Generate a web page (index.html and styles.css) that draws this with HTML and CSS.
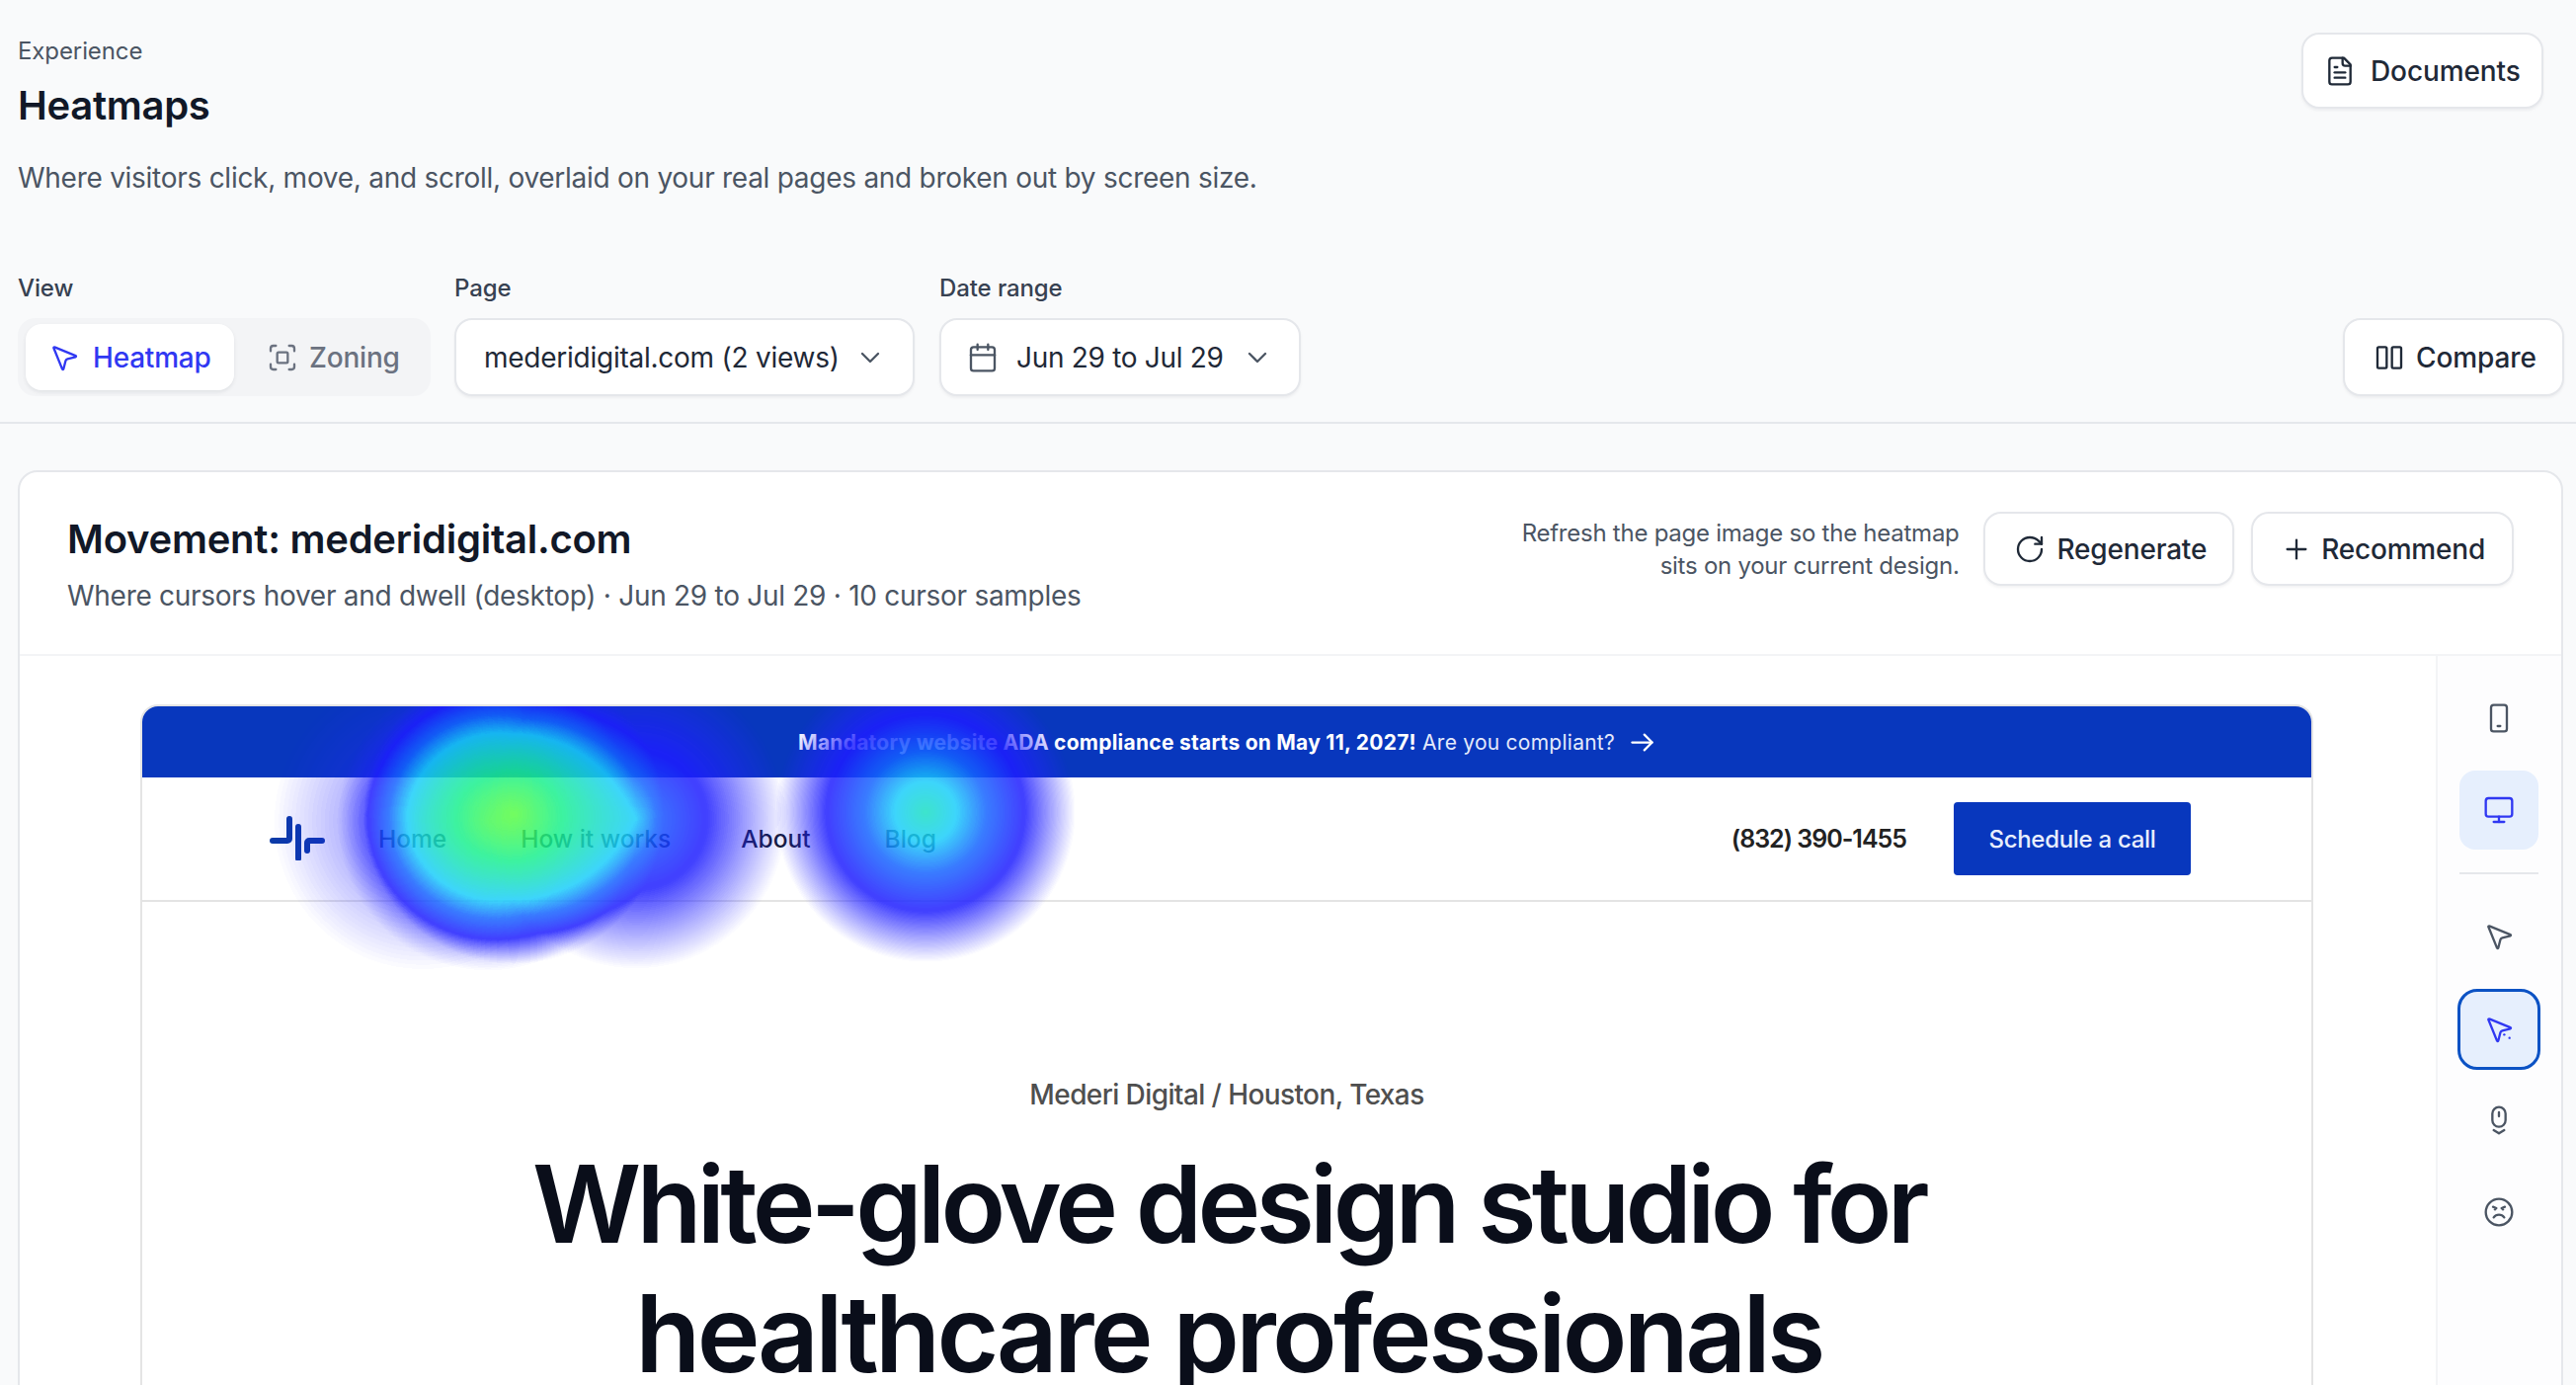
FILE: index.html
```html
<!DOCTYPE html>
<html lang="en">
<head>
    <meta charset="UTF-8">
    <meta name="viewport" content="width=device-width, initial-scale=1.0">
    <title>Heatmaps</title>
    <link rel="stylesheet" href="styles.css">
</head>
<body>
    <header class="page-head">
        <div>
            <div class="crumb">Experience</div>
            <h1>Heatmaps</h1>
            <p class="lead">Where visitors click, move, and scroll, overlaid on your real pages and broken out by screen size.</p>
        </div>
        <button class="btn btn-docs">
            <svg class="icon" viewBox="0 0 24 24"><path d="M15 2H6a2 2 0 0 0-2 2v16a2 2 0 0 0 2 2h12a2 2 0 0 0 2-2V7z"/><path d="M14 2v4a2 2 0 0 0 2 2h4"/><path d="M16 13H8"/><path d="M16 17H8"/><path d="M10 9H8"/></svg>
            Documents
        </button>
    </header>

    <section class="controls">
        <div class="field">
            <label>View</label>
            <div class="segmented">
                <button class="seg seg-on">
                    <svg class="icon" viewBox="0 0 24 24"><path d="M4.037 4.688a.495.495 0 0 1 .651-.651l16 6.500a.5.5 0 0 1-.063.947l-6.124 1.580a2 2 0 0 0-1.438 1.435l-1.579 6.126a.5.5 0 0 1-.947.063z"/></svg>
                    Heatmap
                </button>
                <button class="seg">
                    <svg class="icon" viewBox="0 0 24 24"><path d="M3 7V5a2 2 0 0 1 2-2h2"/><path d="M17 3h2a2 2 0 0 1 2 2v2"/><path d="M21 17v2a2 2 0 0 1-2 2h-2"/><path d="M7 21H5a2 2 0 0 1-2-2v-2"/><rect x="8" y="8" width="8" height="8" rx="1"/></svg>
                    Zoning
                </button>
            </div>
        </div>
        <div class="field">
            <label>Page</label>
            <button class="btn btn-select btn-page">
                mederidigital.com (2 views)
                <svg class="icon chev" viewBox="0 0 24 24"><path d="m6 9 6 6 6-6"/></svg>
            </button>
        </div>
        <div class="field">
            <label>Date range</label>
            <button class="btn btn-select btn-date">
                <svg class="icon cal" viewBox="0 0 24 24"><path d="M8 2v4"/><path d="M16 2v4"/><rect x="3" y="4" width="18" height="18" rx="2"/><path d="M3 10h18"/></svg>
                Jun 29 to Jul 29
                <svg class="icon chev" viewBox="0 0 24 24"><path d="m6 9 6 6 6-6"/></svg>
            </button>
        </div>
        <button class="btn btn-select btn-compare">
            <svg class="icon" viewBox="0 0 24 24"><rect x="3" y="4" width="7" height="16" rx="1"/><rect x="14" y="4" width="7" height="16" rx="1"/></svg>
            Compare
        </button>
    </section>

    <main class="card">
        <div class="card-head">
            <div>
                <h2>Movement: mederidigital.com</h2>
                <p class="card-sub">Where cursors hover and dwell (desktop) · Jun 29 to Jul 29 · 10 cursor samples</p>
            </div>
            <div class="card-actions">
                <p class="hint">Refresh the page image so the heatmap<br>sits on your current design.</p>
                <button class="btn btn-action">
                    <svg class="icon" viewBox="0 0 24 24"><path d="M21 12a9 9 0 1 1-9-9c2.52 0 4.93 1 6.74 2.74L21 8"/><path d="M21 3v5h-5"/></svg>
                    Regenerate
                </button>
                <button class="btn btn-action">
                    <svg class="icon" viewBox="0 0 24 24"><path d="M5 12h14"/><path d="M12 5v14"/></svg>
                    Recommend
                </button>
            </div>
        </div>

        <div class="card-body">
            <div class="stage">
                <div class="site">
                    <div class="site-banner">
                        <span><b>Mandatory website ADA compliance starts on May 11, 2027!</b> Are you compliant?</span>
                        <svg class="banner-arrow" viewBox="0 0 24 24"><path d="M3 12h18"/><path d="m14 5 7 7-7 7"/></svg>
                    </div>
                    <nav class="site-nav">
                        <svg class="site-logo" viewBox="0 0 56 46"><path d="M20 4v20a2 2 0 0 1-2 2H3"/><path d="M29 12v32"/><path d="M38 36V28a2 2 0 0 1 2-2h13"/></svg>
                        <a>Home</a>
                        <a>How it works</a>
                        <a>About</a>
                        <a>Blog</a>
                        <span class="site-phone">(832) 390-1455</span>
                        <span class="site-cta">Schedule a call</span>
                    </nav>
                    <div class="site-hero">
                        <p class="site-tag">Mederi Digital / Houston, Texas</p>
                        <h3><span class="hero-one">White-glove design studio for</span><br><span class="hero-two">healthcare professionals</span></h3>
                    </div>
                    <canvas id="heat" class="heat"></canvas>
                </div>
            </div>

            <aside class="rail">
                <button class="rail-btn">
                    <svg class="icon" viewBox="0 0 24 24"><rect x="6" y="2" width="12" height="20" rx="2"/><path d="M11 18h2"/></svg>
                </button>
                <button class="rail-btn rail-soft">
                    <svg class="icon" viewBox="0 0 24 24"><rect x="2" y="3" width="20" height="14" rx="2"/><path d="M8 21h8"/><path d="M12 17v4"/></svg>
                </button>
                <div class="rail-sep"></div>
                <button class="rail-btn">
                    <svg class="icon" viewBox="0 0 24 24"><path d="M4.037 4.688a.495.495 0 0 1 .651-.651l16 6.500a.5.5 0 0 1-.063.947l-6.124 1.580a2 2 0 0 0-1.438 1.435l-1.579 6.126a.5.5 0 0 1-.947.063z"/></svg>
                </button>
                <button class="rail-btn rail-active">
                    <svg class="icon" viewBox="0 0 24 24"><path d="M4.037 4.688a.495.495 0 0 1 .651-.651l16 6.500a.5.5 0 0 1-.063.947l-6.124 1.580a2 2 0 0 0-1.438 1.435l-1.579 6.126a.5.5 0 0 1-.947.063z"/><path d="M16 16h.01"/><path d="M20 18.500h.01"/></svg>
                </button>
                <button class="rail-btn">
                    <svg class="icon" viewBox="0 0 24 24"><rect x="7" y="2" width="10" height="15" rx="5"/><path d="M12 6v3"/><path d="m8 19.500 4 2.500 4-2.500"/></svg>
                </button>
                <button class="rail-btn">
                    <svg class="icon" viewBox="0 0 24 24"><circle cx="12" cy="12" r="10"/><path d="M16 16s-1.500-2-4-2-4 2-4 2"/><path d="M7.500 8 10 9"/><path d="m14 9 2.500-1"/><path d="M9 10h.01"/><path d="M15 10h.01"/></svg>
                </button>
            </aside>
        </div>
    </main>

    <script src="heatmap.js"></script>
</body>
</html>
```

FILE: styles.css
```css
* {
    box-sizing: border-box;
}
html, body {
    height: 1402px;
    overflow: hidden;
}
body {
    margin: 0;
    background: #f9fafb;
    color: #111827;
    font-family: Inter, 'Liberation Sans', sans-serif;
}
button {
    font-family: inherit;
    white-space: nowrap;
}
.icon {
    width: 32px;
    height: 32px;
    flex: none;
    fill: none;
    stroke: currentColor;
    stroke-width: 1.75;
    stroke-linecap: round;
    stroke-linejoin: round;
}
.page-head {
    display: flex;
    justify-content: space-between;
    align-items: flex-start;
    padding: 33px 33px 0 18px;
}
.crumb {
    font-size: 24px;
    line-height: 36px;
    color: #4b5563;
    letter-spacing: -0.1px;
    padding-top: 1px;
}
h1 {
    margin: 13px 0 0;
    font-size: 40px;
    line-height: 48px;
    font-weight: 600;
    letter-spacing: -0.3px;
}
.lead {
    margin: 29px 0 0;
    font-size: 28px;
    line-height: 40px;
    color: #4b5563;
    letter-spacing: -0.27px;
}
.btn {
    display: flex;
    align-items: center;
    background: #fff;
    border: 2px solid #e5e7eb;
    border-radius: 18px;
    color: #1f2937;
    font-size: 28px;
    font-weight: 500;
    letter-spacing: -0.1px;
    box-shadow: 0 2px 3px rgba(17, 24, 39, 0.05);
}
.btn-docs {
    width: 245px;
    height: 77px;
    padding: 0 0 0 21px;
    gap: 15px;
}
.controls {
    display: flex;
    align-items: flex-end;
    margin-top: 75px;
    padding: 0 12px 26px 18px;
    border-bottom: 2px solid #e5e7eb;
    height: 154px;
}
.field label {
    display: block;
    font-size: 24px;
    line-height: 32px;
    font-weight: 500;
    color: #374151;
    margin-bottom: 14px;
    letter-spacing: -0.1px;
}
.segmented {
    display: flex;
    width: 418px;
    height: 79px;
    padding: 6px 8px;
    margin-right: 24px;
    background: #f3f4f6;
    border-radius: 18px;
}
.seg {
    display: flex;
    align-items: center;
    gap: 11px;
    height: 67px;
    border: 0;
    border-radius: 16px;
    background: none;
    color: #6b7280;
    font-size: 28px;
    font-weight: 500;
    letter-spacing: -0.2px;
    padding: 0 0 0 33px;
}
.seg-on {
    width: 211px;
    padding-left: 23px;
    gap: 13px;
    background: #fff;
    color: #3038f2;
    box-shadow: 0 2px 4px rgba(17, 24, 39, 0.08);
}
.btn-select {
    height: 79px;
    color: #1f2937;
}
.btn-page {
    width: 466px;
    padding: 0 27px 0 28px;
    justify-content: space-between;
    margin-right: 25px;
    font-weight: 400;
    letter-spacing: -0.25px;
}
.btn-date {
    width: 366px;
    padding: 0 27px 0 26px;
    gap: 18px;
    font-weight: 400;
    letter-spacing: -0.3px;
}
.btn-date .chev {
    margin-left: auto;
}
.cal {
    color: #4b5563;
}
.chev {
    color: #4b5563;
}
.btn-compare {
    width: 224px;
    margin-left: auto;
    padding: 0 0 0 29px;
    gap: 11px;
}
.card {
    margin: 47px 13px 0 18px;
    height: 1000px;
    background: #fff;
    border: 2px solid #e5e7eb;
    border-radius: 20px 20px 0 0;
}
.card-head {
    display: flex;
    justify-content: space-between;
    align-items: center;
    height: 186px;
    padding: 2px 48px 0;
    border-bottom: 2px solid #f3f4f6;
}
h2 {
    margin: 0;
    font-size: 40px;
    line-height: 50px;
    font-weight: 600;
    letter-spacing: -0.25px;
}
.card-sub {
    margin: 14px 0 0;
    font-size: 28px;
    line-height: 36px;
    color: #4b5563;
    letter-spacing: -0.28px;
}
.card-actions {
    display: flex;
    align-items: center;
    align-self: flex-start;
    margin-top: 38px;
}
.hint {
    margin: 0 24px 0 0;
    text-align: right;
    font-size: 24px;
    line-height: 33px;
    color: #4b5563;
    letter-spacing: -0.25px;
}
.btn-action {
    height: 75px;
    padding: 0 27px 0 28px;
    gap: 9px;
    margin-left: 17px;
    letter-spacing: -0.2px;
}
.btn-action:first-of-type {
    margin-left: 0;
    padding-left: 29px;
    padding-right: 26px;
    gap: 12px;
}
.card-body {
    display: flex;
    height: 800px;
}
.stage {
    flex: 1;
    padding: 49px 124px 0 122px;
    min-width: 0;
}
.site {
    position: relative;
    height: 760px;
    background: #fff;
    border: 2px solid #e4e4e4;
    border-bottom: 0;
    border-radius: 18px 18px 0 0;
    overflow: hidden;
}
.site-banner {
    display: flex;
    align-items: center;
    justify-content: center;
    gap: 14px;
    height: 72px;
    background: #0837bd;
    color: #e3e9fb;
    font-size: 21px;
    letter-spacing: 0.25px;
}
.site-banner b {
    font-weight: 700;
    color: #fff;
}
.banner-arrow {
    width: 27px;
    height: 27px;
    fill: none;
    stroke: #fff;
    stroke-width: 2;
    stroke-linecap: round;
    stroke-linejoin: round;
}
.site-nav {
    display: flex;
    align-items: center;
    height: 126px;
    padding-left: 129px;
    border-bottom: 2px solid #e4e4e4;
    font-size: 24.500px;
    font-weight: 500;
    color: #151b33;
}
.site-logo {
    width: 56px;
    height: 46px;
    margin: -3px 54px 0 0;
    fill: none;
    stroke: #0b3aa8;
    stroke-width: 6;
    stroke-linecap: round;
}
.site-nav a {
    margin-right: 75px;
}
.site-nav a:nth-of-type(2) {
    margin-right: 71px;
}
.site-phone {
    margin-left: auto;
    margin-right: 48px;
    font-weight: 600;
    font-size: 25px;
    letter-spacing: -1px;
    color: #222;
}
.site-cta {
    display: flex;
    align-items: center;
    justify-content: center;
    width: 240px;
    height: 74px;
    margin-right: 122px;
    background: #0837bd;
    border-radius: 4px;
    color: #e8eefc;
    font-size: 24px;
    letter-spacing: -0.3px;
}
.site-hero {
    text-align: center;
    padding-top: 175px;
}
.site-tag {
    margin: 0;
    font-size: 28px;
    line-height: 40px;
    color: #4f4f4f;
    font-weight: 500;
    letter-spacing: -0.6px;
}
h3 {
    margin: 25px 0 0;
    padding-left: 4px;
    font-size: 108px;
    line-height: 131px;
    font-weight: 600;
    color: #0a0e1a;
}
.hero-one {
    letter-spacing: -4.75px;
}
.hero-two {
    letter-spacing: -3.7px;
}
.heat {
    position: absolute;
    left: 0;
    top: 0;
}
.rail {
    width: 127px;
    padding: 23px 2px 0 0;
    background: #fdfdfe;
    border-left: 2px solid #f3f4f6;
    display: flex;
    flex-direction: column;
    align-items: center;
    color: #4b5563;
}
.rail-btn {
    display: flex;
    align-items: center;
    justify-content: center;
    width: 80px;
    height: 80px;
    margin-bottom: 13px;
    border: 0;
    border-radius: 16px;
    background: none;
    color: #4b5563;
    padding: 0;
}
.rail-soft {
    background: #e6effd;
    color: #3038f2;
    margin-bottom: 23px;
}
.rail-sep {
    width: 80px;
    height: 2px;
    background: #e5e7eb;
    margin-bottom: 23px;
}
.rail-active {
    width: 84px;
    height: 82px;
    background: #e6effd;
    color: #3038f2;
    border: 3px solid #0b52c4;
    border-radius: 20px;
    margin-bottom: 11px;
}
```

FILE: heatmap.js
```js
// cursor samples, in page pixels: [x, y, weight]
var samples = [
    [376, 109, 0.6],
    [350, 116, 0.36],
    [284, 116, 0.14],
    [500, 114, 0.32],
    [793, 107, 0.5]
];
var radius = 152;

var canvas = document.getElementById('heat');
var box = canvas.parentNode;
canvas.width = box.clientWidth;
canvas.height = box.clientHeight;
var ctx = canvas.getContext('2d');

// colour ramp, low to high heat
var ramp = document.createElement('canvas');
ramp.width = 256;
ramp.height = 1;
var rampCtx = ramp.getContext('2d');
var grad = rampCtx.createLinearGradient(0, 0, 256, 0);
grad.addColorStop(0, 'rgb(40,40,255)');
grad.addColorStop(0.18, 'rgb(30,30,255)');
grad.addColorStop(0.3, 'rgb(20,100,255)');
grad.addColorStop(0.4, 'rgb(25,205,250)');
grad.addColorStop(0.6, 'rgb(25,240,140)');
grad.addColorStop(0.8, 'rgb(110,255,40)');
grad.addColorStop(1, 'rgb(200,255,0)');
rampCtx.fillStyle = grad;
rampCtx.fillRect(0, 0, 256, 1);
var colours = rampCtx.getImageData(0, 0, 256, 1).data;

samples.forEach(function (p) {
    var g = ctx.createRadialGradient(p[0], p[1], 0, p[0], p[1], radius);
    g.addColorStop(0, 'rgba(0,0,0,' + p[2] + ')');
    g.addColorStop(1, 'rgba(0,0,0,0)');
    ctx.fillStyle = g;
    ctx.fillRect(p[0] - radius, p[1] - radius, radius * 2, radius * 2);
});

var img = ctx.getImageData(0, 0, canvas.width, canvas.height);
for (var i = 0; i < img.data.length; i += 4) {
    var v = img.data[i + 3];
    if (!v) continue;
    img.data[i] = colours[v * 4];
    img.data[i + 1] = colours[v * 4 + 1];
    img.data[i + 2] = colours[v * 4 + 2];
    img.data[i + 3] = Math.min(v * 5, 215);
}
ctx.putImageData(img, 0, 0);
```
